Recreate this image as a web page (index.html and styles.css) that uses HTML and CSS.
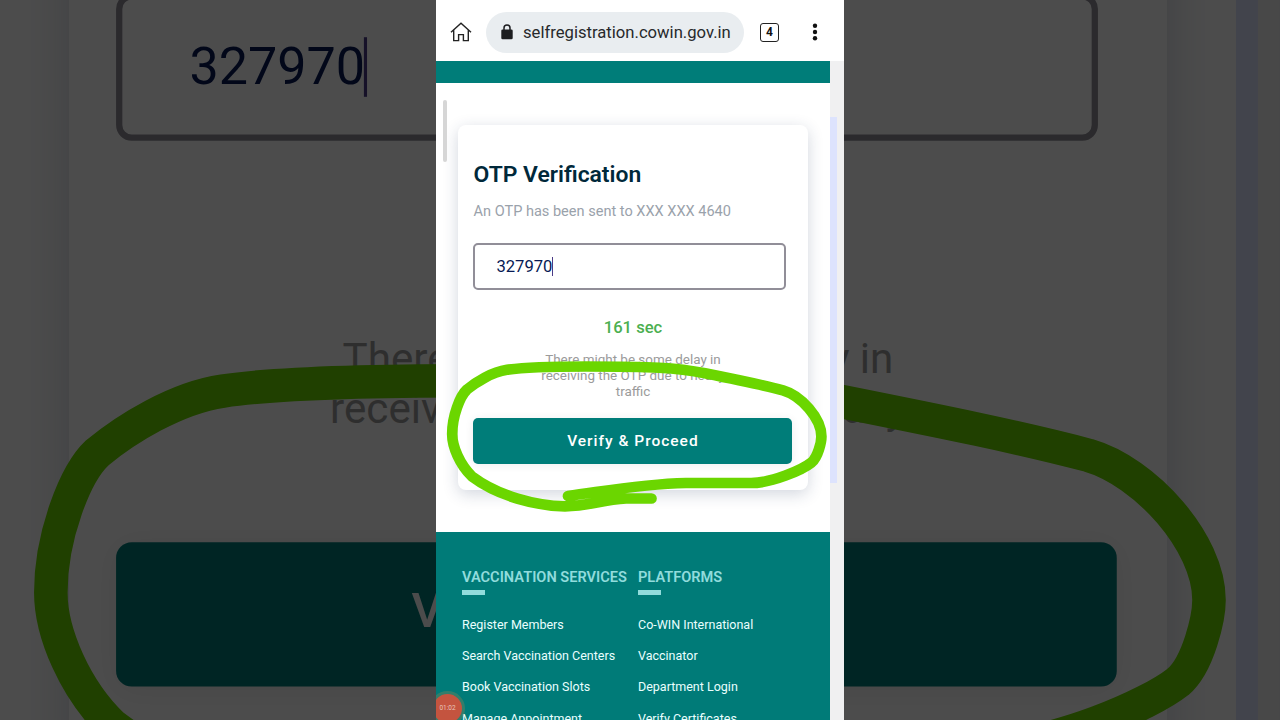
FILE: index.html
```html
<!DOCTYPE html>
<html lang="en">
<head>
    <meta charset="UTF-8">
    <meta name="viewport" content="width=device-width, initial-scale=1.0">
    <title>OTP Verification</title>
    <link rel="stylesheet" href="styles.css">
</head>
<body>
    <svg class="defs" width="0" height="0">
        <symbol id="marker" viewBox="0 0 408 720">
            <path d="M215.5 498.5 H190 C165 500 153 506 129 506.3 C100 506 62 496 36 476.5 C24 465 16.2 447 16.2 434 C16.2 416 24 396 31 389.5 C40 382 56 372 71 369.8 C90 367 120 366.5 150 366.5 C215 366.5 240 367.5 269 373.3 C300 379.5 325 384.5 347 390.3 C365 395.5 385.4 418 385.4 436.4 C385.4 442 382 457 375.5 462.5 C366 470 336 483 315 483 H250 C205 484 170 491 132 496" fill="none" stroke="#6bd600" stroke-width="10.7" stroke-linecap="round" stroke-linejoin="round"/>
        </symbol>
    </svg>

    <!-- dimmed enlarged copy behind the phone -->
    <div class="backdrop" aria-hidden="true">
        <div class="backdrop-screen">
            <div class="page">
                <div class="content">
                    <div class="card">
                        <div class="otp-input">327970<span class="caret"></span></div>
                        <p class="note">There might be some delay in<br>receiving the OTP due to heavy</p>
                        <div class="verify-button">Verify &amp; Proceed</div>
                    </div>
                </div>
                <div class="gutter"><div class="scroll-thumb"></div></div>
            </div>
            <svg class="drawing"><use href="#marker"/></svg>
        </div>
    </div>

    <div class="phone">
        <div class="browser-bar">
            <svg class="home-icon" width="22" height="20" viewBox="0 0 22 20" fill="none" stroke="#222" stroke-width="1.4">
                <path d="M1 10.3 L11 1.3 L21 10.3 M3.7 8.2 V18.6 H8.6 V12.6 H13.4 V18.6 H18.3 V8.2"/>
            </svg>
            <div class="address">
                <svg width="12" height="16" viewBox="0 0 12 16">
                    <path d="M3 6 V4 A3 3 0 0 1 9 4 V6" fill="none" stroke="#1d1e20" stroke-width="1.5"/>
                    <rect x="0.3" y="5.5" width="11.4" height="9.7" rx="1.3" fill="#1d1e20"/>
                </svg>
                <span>selfregistration.cowin.gov.in</span>
            </div>
            <div class="tabs">4</div>
            <svg class="menu-icon" width="6" height="18" viewBox="0 0 6 18" fill="#111">
                <circle cx="3" cy="2.8" r="2.2"/>
                <circle cx="3" cy="9" r="2.2"/>
                <circle cx="3" cy="15.2" r="2.2"/>
            </svg>
        </div>

        <div class="page">
            <div class="content">
                <div class="top-strip"></div>
                <div class="card">
                    <h1>OTP Verification</h1>
                    <p class="sent">An OTP has been sent to XXX XXX 4640</p>
                    <div class="otp-input">327970<span class="caret"></span></div>
                    <p class="timer">161 sec</p>
                    <p class="note">There might be some delay in<br>receiving the OTP due to heavy<br>traffic</p>
                    <button class="verify-button">Verify &amp; Proceed</button>
                </div>
                <div class="footer">
                    <div class="footer-col">
                        <h2>VACCINATION SERVICES</h2>
                        <a>Register Members</a>
                        <a>Search Vaccination Centers</a>
                        <a>Book Vaccination Slots</a>
                        <a>Manage Appointment</a>
                    </div>
                    <div class="footer-col">
                        <h2>PLATFORMS</h2>
                        <a>Co-WIN International</a>
                        <a>Vaccinator</a>
                        <a>Department Login</a>
                        <a>Verify Certificates</a>
                    </div>
                </div>
            </div>
            <div class="gutter"><div class="scroll-thumb"></div></div>
        </div>

        <div class="edge-handle"></div>
        <svg class="drawing"><use href="#marker"/></svg>
        <div class="record-badge">01:02</div>
    </div>
</body>
</html>
```
FILE: styles.css
```css
* {
    box-sizing: border-box;
}
body {
    margin: 0;
    height: 720px;
    overflow: hidden;
    position: relative;
    background-color: #000;
    font-family: Roboto, "Liberation Sans", sans-serif;
}
h1, h2, p {
    margin: 0;
}
.defs {
    position: absolute;
}

/* backdrop */
.backdrop {
    position: absolute;
    inset: 0;
    overflow: hidden;
    opacity: 0.298;
}
.backdrop-screen {
    position: absolute;
    left: 0;
    top: -769px;
    width: 408px;
    height: 720px;
    background-color: #fff;
    transform: scale(3.137);
    transform-origin: 0 0;
}
.backdrop .page {
    margin-top: 61px;
}
.backdrop .card {
    margin-top: 64px;
    padding-top: 118px;
}
.backdrop .note {
    margin-top: 62px;
    margin-bottom: 34px;
}

/* phone */
.phone {
    position: relative;
    width: 408px;
    height: 720px;
    margin-left: 436px;
    overflow: hidden;
    background-color: #fff;
}
.browser-bar {
    display: flex;
    align-items: center;
    height: 61px;
    padding: 3px 26px 0 14px;
}
.address {
    display: flex;
    align-items: center;
    width: 258px;
    height: 41px;
    margin-left: 14px;
    padding-left: 15px;
    border-radius: 21px;
    background-color: #e9edf0;
    color: #27292b;
    font-size: 16.65px;
    white-space: nowrap;
}
.address span {
    margin-left: 10px;
}
.tabs {
    width: 19px;
    height: 19px;
    margin-left: 16px;
    border: 1.5px solid #222;
    border-radius: 3px;
    font-size: 12px;
    font-weight: bold;
    line-height: 17px;
    text-align: center;
    color: #111;
}
.menu-icon {
    margin-left: auto;
}
.page {
    display: flex;
    height: 659px;
}
.content {
    width: 394px;
}
.gutter {
    width: 14px;
    padding-top: 56px;
    background-color: #f0f0f1;
}
.scroll-thumb {
    width: 7px;
    height: 366px;
    background-color: #dde3fd;
}
.top-strip {
    height: 22px;
    background-color: #007d79;
}

/* card */
.card {
    width: 350px;
    height: 365px;
    margin: 42px 22px 0;
    padding: 34px 15.5px 0;
    border-radius: 8px;
    background-color: #fff;
    box-shadow: 0 4px 16px rgba(30, 50, 90, 0.2);
}
.card h1 {
    font-size: 22.9px;
    font-weight: 600;
    line-height: 32px;
    color: #00283a;
}
.sent {
    margin-top: 11px;
    font-size: 14.55px;
    line-height: 20px;
    color: #9aa2ab;
}
.otp-input {
    display: flex;
    align-items: center;
    width: 313px;
    height: 47px;
    margin-top: 21px;
    margin-left: -0.1px;
    padding-left: 21px;
    border: 2px solid #918e98;
    border-radius: 5px;
    font-size: 16.6px;
    color: #071a55;
}
.backdrop .otp-input {
    margin-top: 0;
}
.caret {
    width: 1px;
    height: 19px;
    background-color: #4b3b86;
}
.timer {
    margin-top: 27px;
    font-size: 16.6px;
    font-weight: 500;
    line-height: 22px;
    text-align: center;
    color: #4caf50;
}
.note {
    margin-top: 13px;
    margin-bottom: 18px;
    font-size: 13.45px;
    line-height: 16px;
    text-align: center;
    color: #9b9b9b;
}
.verify-button {
    display: block;
    width: 319px;
    height: 46px;
    margin-left: -0.1px;
    padding: 0;
    border: none;
    border-radius: 5px;
    background-color: #007d79;
    box-shadow: 0 1px 10px rgba(0, 0, 0, 0.07);
    color: #fff;
    font-family: inherit;
    font-size: 15.5px;
    font-weight: 500;
    line-height: 45px;
    letter-spacing: 1px;
    text-align: center;
}

/* footer */
.footer {
    display: flex;
    height: 188px;
    margin-top: 42px;
    padding: 35px 0 0 26px;
    overflow: hidden;
    background-color: #007b78;
}
.footer-col {
    width: 176px;
    flex-shrink: 0;
}
.footer-col h2 {
    margin-bottom: 14px;
    font-size: 14.6px;
    font-weight: 600;
    line-height: 20px;
    white-space: nowrap;
    color: #91dcdc;
}
.footer-col h2::after {
    content: "";
    display: block;
    width: 23px;
    height: 5px;
    margin-top: 3px;
    background-color: #91dcdc;
}
.footer-col a {
    display: block;
    font-size: 12.5px;
    line-height: 31.2px;
    white-space: nowrap;
    color: #eaffff;
}

/* overlays */
.edge-handle {
    position: absolute;
    left: 7px;
    top: 100px;
    width: 4px;
    height: 62px;
    border-radius: 2px;
    background-color: #d6d6d6;
}
.drawing {
    position: absolute;
    left: 0;
    top: 0;
    width: 408px;
    height: 720px;
}
.record-badge {
    position: absolute;
    left: -3px;
    top: 694px;
    width: 29px;
    height: 29px;
    border-radius: 50%;
    background-color: #c4543f;
    box-shadow: 0 0 0 3px rgba(110, 130, 90, 0.45);
    color: #e8c4ba;
    font-size: 6.5px;
    line-height: 29px;
    text-align: center;
}
```
